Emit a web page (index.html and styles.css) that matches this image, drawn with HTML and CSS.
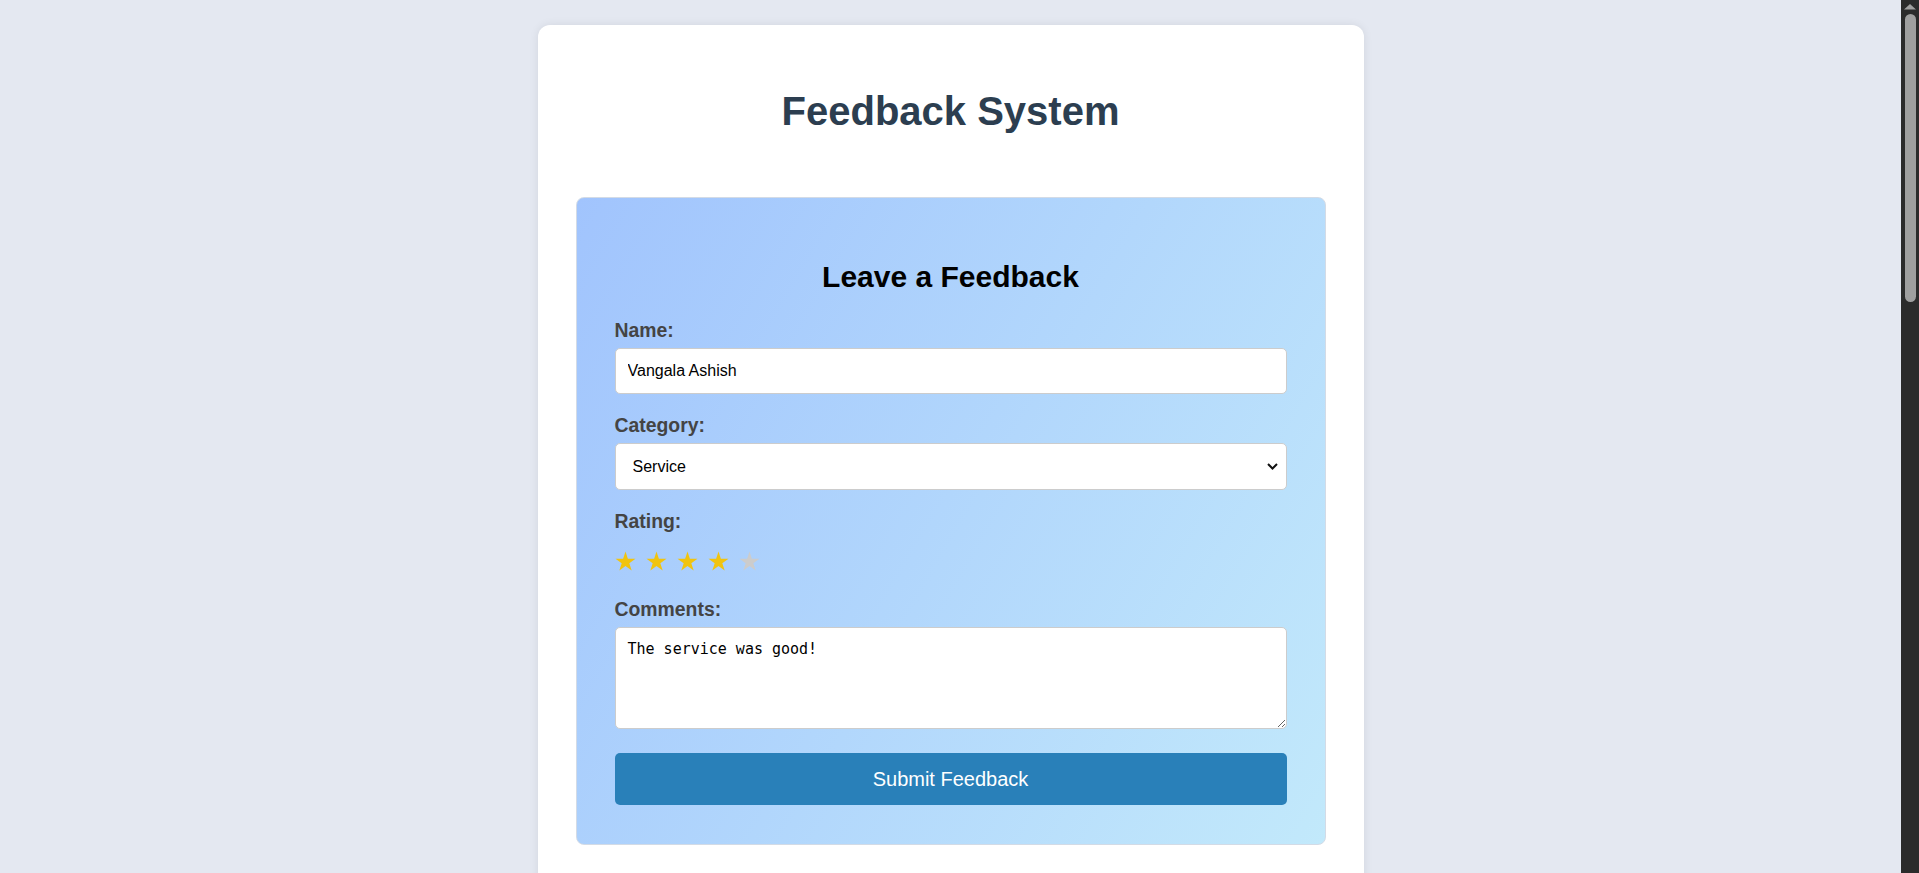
FILE: index.html
```html
<!DOCTYPE html>
<html lang="en">
<head>
<meta charset="UTF-8">
<title>Feedback System</title>
<link rel="stylesheet" href="styles.css">
</head>
<body>
<div class="container">
  <h1 class="title">Feedback System</h1>
  <div class="form-box">
    <h2 class="form-title">Leave a Feedback</h2>
    <form class="feedback-form">
      <div class="form-group">
        <label class="field-label" for="name">Name:</label>
        <input class="field text-field" type="text" id="name" value="Vangala Ashish">
      </div>
      <div class="form-group">
        <label class="field-label" for="category">Category:</label>
        <div class="select-wrap">
          <select class="field select-field" id="category">
            <option>Product</option>
            <option selected>Service</option>
            <option>Support</option>
            <option>Other</option>
          </select>
          <svg class="chevron" width="11" height="7" viewBox="0 0 11 7"><path d="M1 1 L5.5 5.5 L10 1" fill="none" stroke="#111" stroke-width="2"/></svg>
        </div>
      </div>
      <div class="form-group">
        <label class="field-label">Rating:</label>
        <div class="stars">
          <svg class="star on" viewBox="0 0 17 16"><polygon points="8.5,0.3 10.41,6.17 16.58,6.17 11.59,9.8 13.5,15.68 8.5,12.05 3.5,15.68 5.41,9.8 0.42,6.17 6.59,6.17"/></svg>
          <svg class="star on" viewBox="0 0 17 16"><polygon points="8.5,0.3 10.41,6.17 16.58,6.17 11.59,9.8 13.5,15.68 8.5,12.05 3.5,15.68 5.41,9.8 0.42,6.17 6.59,6.17"/></svg>
          <svg class="star on" viewBox="0 0 17 16"><polygon points="8.5,0.3 10.41,6.17 16.58,6.17 11.59,9.8 13.5,15.68 8.5,12.05 3.5,15.68 5.41,9.8 0.42,6.17 6.59,6.17"/></svg>
          <svg class="star on" viewBox="0 0 17 16"><polygon points="8.5,0.3 10.41,6.17 16.58,6.17 11.59,9.8 13.5,15.68 8.5,12.05 3.5,15.68 5.41,9.8 0.42,6.17 6.59,6.17"/></svg>
          <svg class="star off" viewBox="0 0 17 16"><polygon points="8.5,0.3 10.41,6.17 16.58,6.17 11.59,9.8 13.5,15.68 8.5,12.05 3.5,15.68 5.41,9.8 0.42,6.17 6.59,6.17"/></svg>
        </div>
      </div>
      <div class="form-group">
        <label class="field-label" for="comments">Comments:</label>
        <textarea class="comments" id="comments">The service was good!</textarea>
      </div>
      <button class="submit-btn" type="button">Submit Feedback</button>
    </form>
  </div>
  <div class="feedback-list"></div>
</div>
<div class="scrollbar">
  <svg class="scroll-arrow" width="18" height="14" viewBox="0 0 18 14"><polygon points="3,9.5 9,4 15,9.5" fill="#a0a0a0"/></svg>
  <div class="scroll-thumb"></div>
</div>
</body>
</html>
```
FILE: styles.css
```css
html {
  background: #e4e8f1;
}

body {
  margin: 0 18px 0 0;
  padding: 25px 0;
  background: #e4e8f1;
  font-family: "Liberation Sans", Arial, sans-serif;
}

.container {
  box-sizing: border-box;
  width: 826px;
  margin: 0 auto;
  padding: 36px 38px 40px;
  background: #fff;
  border-radius: 12px;
  box-shadow: 0 0 10px rgba(0, 0, 0, 0.08);
}

.title {
  margin: 27px 0 63px;
  font-size: 40px;
  font-weight: bold;
  line-height: 46px;
  color: #2c3e50;
  text-align: center;
}

.form-box {
  box-sizing: border-box;
  width: 750px;
  margin: 0 auto;
  padding: 37px 38px 39px;
  border: 1px solid #d3dbe6;
  border-radius: 8px;
  background: linear-gradient(120deg, #a1c4fd 0%, #c2e9fb 100%);
}

.form-title {
  margin: 25px 0;
  font-size: 30px;
  font-weight: bold;
  color: #000;
  text-align: center;
}

.form-group {
  margin-bottom: 20px;
}

.field-label {
  display: block;
  margin-bottom: 6px;
  font-size: 19.4px;
  font-weight: bold;
  color: #444;
}

.field {
  box-sizing: border-box;
  width: 100%;
  padding: 12px;
  border: 1px solid #ccc;
  border-radius: 5px;
  background: #fff;
  font-family: "Liberation Sans", Arial, sans-serif;
  font-size: 16px;
  color: #000;
  outline: none;
}

.text-field {
  height: 46px;
}

.select-wrap {
  position: relative;
}

.select-field {
  -webkit-appearance: none;
  appearance: none;
  height: 47px;
  padding: 12px 30px 12px 17px;
}

.chevron {
  position: absolute;
  right: 9px;
  top: 20px;
  pointer-events: none;
}

.stars {
  display: flex;
  gap: 10px;
  padding: 12px 0 7px;
}

.star {
  width: 21px;
  height: 20px;
}

.star.on {
  fill: #f1c40f;
}

.star.off {
  fill: #cccccc;
}

.comments {
  box-sizing: border-box;
  width: 100%;
  height: 102px;
  padding: 12px;
  border: 1px solid #ccc;
  border-radius: 5px;
  background: #fff;
  font-family: "DejaVu Sans Mono", "Liberation Mono", monospace;
  font-size: 15px;
  color: #000;
  outline: none;
}

.submit-btn {
  display: block;
  width: 100%;
  padding: 14px;
  border: none;
  border-radius: 5px;
  background: #2980b9;
  color: #fff;
  font-family: "Liberation Sans", Arial, sans-serif;
  font-size: 20px;
  line-height: 24px;
  cursor: pointer;
}

.feedback-list {
  min-height: 1620px;
}

.scrollbar {
  position: fixed;
  top: 0;
  right: 0;
  bottom: 0;
  width: 18px;
  background: #2b2b2b;
}

.scroll-arrow {
  display: block;
}

.scroll-thumb {
  width: 11px;
  height: 288px;
  margin-left: 4px;
  border-radius: 6px;
  background: #9f9f9f;
}
```
